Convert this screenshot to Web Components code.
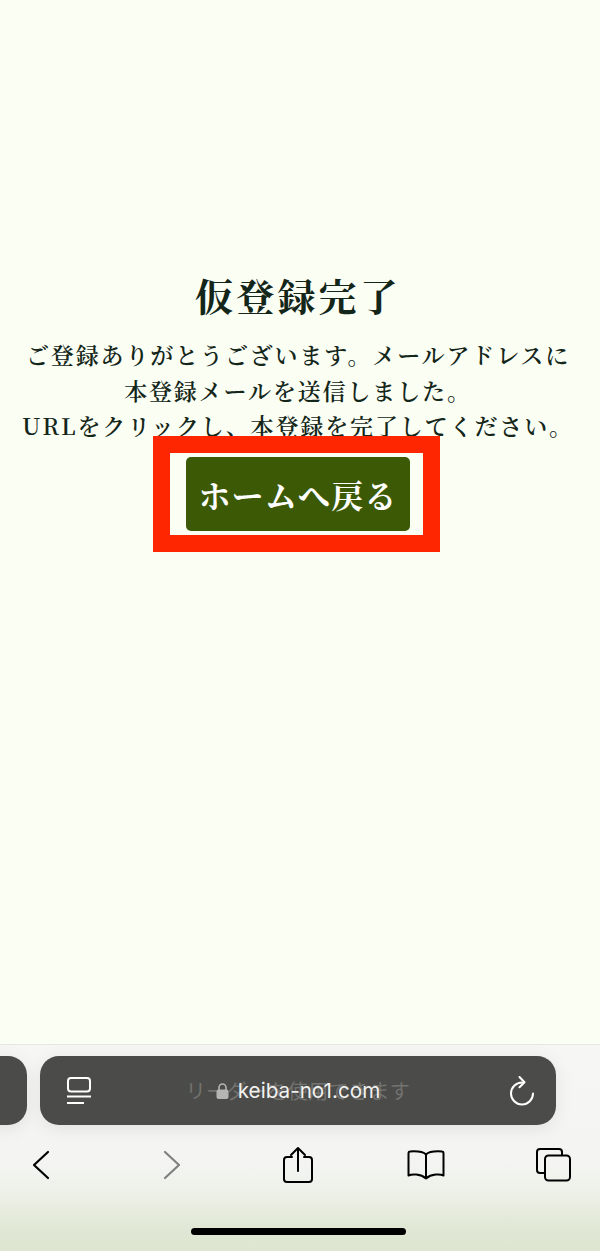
<!DOCTYPE html>
<html lang="ja">
<head>
<meta charset="utf-8">
<title>仮登録完了</title>
<style>
  html, body { margin: 0; height: 100%; }
  body { background: #fbfff3; }
</style>
</head>
<body>
<signup-page>
  <span slot="title">仮登録完了</span>
  <span slot="line">ご登録ありがとうございます。メールアドレスに</span>
  <span slot="line">本登録メールを送信しました。</span>
  <span slot="line">URLをクリックし、本登録を完了してください。</span>
  <span slot="action">ホームへ戻る</span>
</signup-page>
<safari-bar host="keiba-no1.com" ghost="リーダーを使用できます"></safari-bar>

<script>
class SignupPage extends HTMLElement {
  constructor() {
    super();
    this.attachShadow({ mode: 'open' });
  }

  connectedCallback() {
    this.shadowRoot.innerHTML = `
      <style>
        :host {
          display: flex;
          flex-direction: column;
          align-items: center;
          height: 1044px;
          padding: 270px 4px 0 0;
          box-sizing: border-box;
          font-family: "Noto Serif CJK JP", "Liberation Serif", "Noto Sans CJK JP", serif;
          color: #14261a;
        }
        h1 {
          margin: 0;
          font-size: 38px;
          line-height: 50px;
          letter-spacing: 3.2px;
          font-weight: 700;
        }
        .lines {
          margin-top: 17px;
          display: flex;
          flex-direction: column;
          align-items: center;
          font-size: 23px;
          line-height: 35.5px;
          letter-spacing: 1.87px;
          font-weight: 600;
          white-space: nowrap;
        }
        .lines ::slotted(span) { display: block; }
        home-button { margin-top: 13px; }
      </style>
      <h1><slot name="title"></slot></h1>
      <div class="lines"><slot name="line"></slot></div>
      <home-button><slot name="action"></slot></home-button>
    `;
  }
}

class HomeButton extends HTMLElement {
  constructor() {
    super();
    this.attachShadow({ mode: 'open' });
  }

  connectedCallback() {
    this.shadowRoot.innerHTML = `
      <style>
        :host { display: block; position: relative; }
        button {
          display: block;
          width: 224px;
          height: 74px;
          border: 0;
          border-radius: 5px;
          background: #3c5a06;
          color: #fff;
          font-family: inherit;
          font-size: 32px;
          font-weight: 700;
          letter-spacing: 1.2px;
          padding: 0;
          white-space: nowrap;
        }
        /* the red mark lies over the page, it is not part of the button */
        .mark {
          position: absolute;
          left: -33px;
          top: -21px;
          width: 287px;
          height: 116px;
          box-sizing: border-box;
          border: 17px solid #fd2600;
          pointer-events: none;
        }
      </style>
      <button><slot></slot></button>
      <div class="mark"></div>
    `;
  }
}

class SafariBar extends HTMLElement {
  constructor() {
    super();
    this.attachShadow({ mode: 'open' });
  }

  connectedCallback() {
    const host = this.getAttribute('host');
    const ghost = this.getAttribute('ghost');
    this.shadowRoot.innerHTML = `
      <style>
        :host {
          display: flex;
          flex-direction: column;
          height: 207px;
          box-sizing: border-box;
          border-top: 1px solid #e4e6df;
          background: linear-gradient(#f6f6f5 0, #f4f5f3 115px, #eef1e9 145px, #e0e7d4 185px, #dde5d0 207px);
          font-family: Inter, "Liberation Sans", "Noto Sans CJK JP", sans-serif;
          overflow: hidden;
        }
        .tabs {
          display: flex;
          gap: 13px;
          margin: 11px 0 0 -489px;
        }
        .pill {
          flex: none;
          width: 516px;
          height: 69px;
          border-radius: 19px;
          background: #4b4b49;
          box-shadow: 0 4px 18px rgba(0, 0, 0, .08);
          display: flex;
          align-items: center;
          justify-content: space-between;
          padding: 0 21px 0 26px;
          box-sizing: border-box;
          position: relative;
        }
        .ghost {
          position: absolute;
          left: 0;
          right: 0;
          text-align: center;
          color: #72726f;
          font-size: 20px;
          letter-spacing: .4px;
        }
        .url {
          position: absolute;
          left: 0;
          right: 0;
          display: flex;
          justify-content: center;
          align-items: center;
          gap: 9px;
          color: #f1f1f0;
          font-size: 20.7px;
        }
        .nav {
          display: grid;
          grid-template-columns: 82px 180px 72px 184px 70px;
          margin-top: 18px;
          height: 44px;
          align-items: center;
          justify-items: center;
        }
        .nav svg { display: block; overflow: visible; }
        .indicator {
          width: 215px;
          height: 7px;
          border-radius: 4px;
          background: #000;
          margin: 41px 0 0 191px;
        }
      </style>
      <div class="tabs">
        <div class="pill"></div>
        <div class="pill">
          <svg width="26" height="30" viewBox="0 0 26 30" fill="none" stroke="#fff" stroke-width="2">
            <rect x="2" y="2" width="22" height="13.5" rx="3"/>
            <path d="M1 20.5h24M1 27h17"/>
          </svg>
          <span class="ghost">${ghost}</span>
          <span class="url">
            <svg width="13" height="16" viewBox="0 0 13 16"><path d="M3 7V4.500a3.500 3.500 0 0 1 7 0V7" fill="none" stroke="#b5b5b4" stroke-width="1.6"/><rect x="0.5" y="6.5" width="12" height="9.5" rx="2" fill="#b5b5b4"/></svg>
            <span>${host}</span>
          </span>
          <svg width="26" height="30" viewBox="0 0 26 30" fill="none" stroke="#fff" stroke-width="2" stroke-linecap="round" stroke-linejoin="round">
            <path d="M13 6.500a11 11 0 1 0 11 11"/>
            <path d="M10.500 1l5 5.200-5 5" />
          </svg>
        </div>
      </div>
      <div class="nav">
        <svg width="18" height="28" viewBox="0 0 18 28" fill="none" stroke="#000" stroke-width="2.2" stroke-linecap="round" stroke-linejoin="round"><path d="M16 1 2 14l14 13"/></svg>
        <svg width="18" height="28" viewBox="0 0 18 28" fill="none" stroke="#808080" stroke-width="2.2" stroke-linecap="round" stroke-linejoin="round"><path d="M2 1l14 13L2 27"/></svg>
        <svg width="30" height="36" viewBox="0 0 30 36" fill="none" stroke="#000" stroke-width="2" stroke-linecap="round" stroke-linejoin="round"><path d="M9 10H4a3 3 0 0 0-3 3v19a3 3 0 0 0 3 3h22a3 3 0 0 0 3-3V13a3 3 0 0 0-3-3h-5M15 24V2M8 8l7-7 7 7"/></svg>
        <svg width="38" height="30" viewBox="0 0 38 30" fill="none" stroke="#000" stroke-width="2" stroke-linecap="round" stroke-linejoin="round"><path d="M19 4.500C16 1.500 11 1 3 1.500 2 1.500 1.500 2.500 1.500 3.500v22c3-1.500 12-2 17.500 3 5.500-5 14.500-4.500 17.500-3v-22c0-1-.5-2-1.500-2-8-.5-13 0-16 3zM19 4.500v24"/></svg>
        <svg width="35" height="34" viewBox="0 0 35 34" fill="none" stroke="#000" stroke-width="2"><path d="M8 25H4a3 3 0 0 1-3-3V4a3 3 0 0 1 3-3h19a3 3 0 0 1 3 3v3.500"/><rect x="9" y="7.500" width="25" height="25" rx="3.500"/></svg>
      </div>
      <div class="indicator"></div>
    `;
  }
}

customElements.define('home-button', HomeButton);
customElements.define('signup-page', SignupPage);
customElements.define('safari-bar', SafariBar);
</script>
</body>
</html>
